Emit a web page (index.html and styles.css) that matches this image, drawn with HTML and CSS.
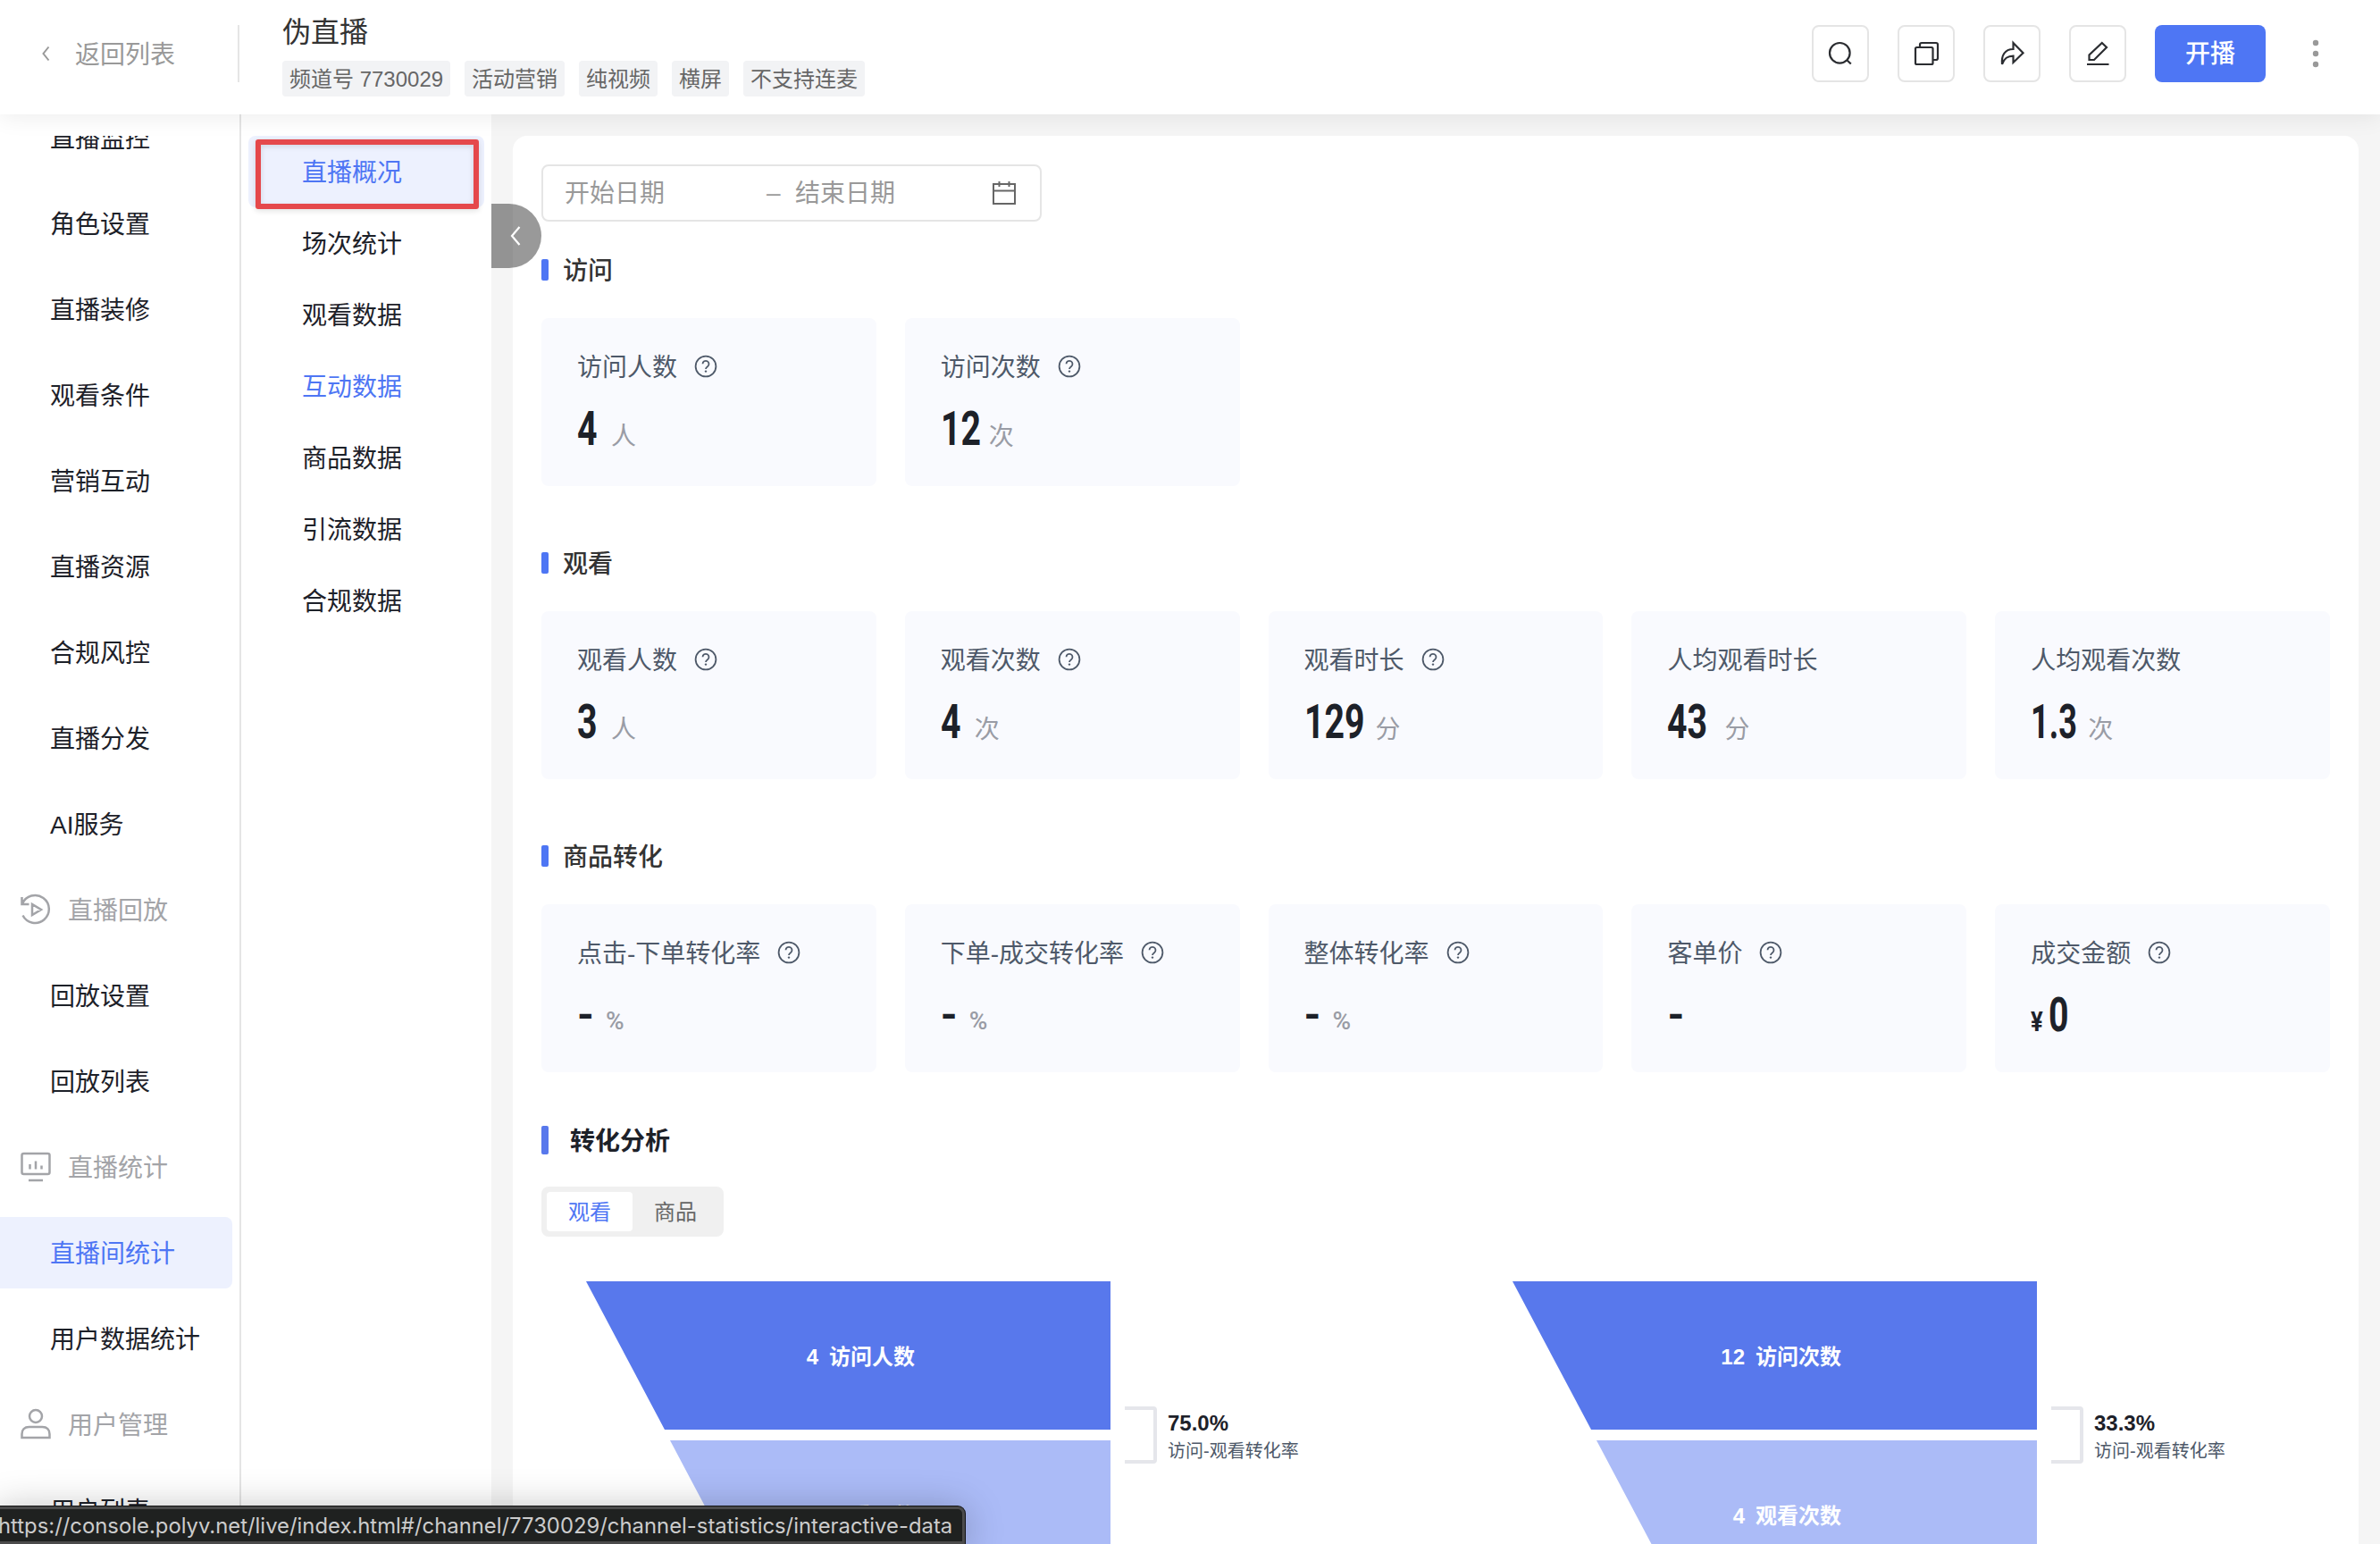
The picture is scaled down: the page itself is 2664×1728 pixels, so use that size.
FILE: index.html
```html
<!DOCTYPE html>
<html lang="zh-CN">
<head>
<meta charset="utf-8">
<title>直播概况</title>
<link rel="stylesheet" href="styles.css">
</head>
<body>
<svg class="defs" width="0" height="0" aria-hidden="true">
  <symbol id="help" viewBox="0 0 28 28"><circle cx="14" cy="14" r="11.400" fill="none" stroke="currentColor" stroke-width="1.800"/><path d="M10.500 11.300a3.500 3.500 0 1 1 5.500 2.900c-1.400 1-2 1.500-2 2.700" fill="none" stroke="currentColor" stroke-width="1.800"/><circle cx="14" cy="19.600" r="1.200" fill="currentColor"/></symbol>
</svg>
<header class="header">
  <a class="back"><svg width="12" height="18" viewBox="0 0 12 18"><path d="M9.500 1.500 3.500 9l6 7.500" fill="none" stroke="currentColor" stroke-width="2"/></svg><span class="t">返回列表</span></a>
  <div class="channel">
    <h1 class="channel-name">伪直播</h1>
    <div class="tags"><span class="tag">频道号 7730029</span><span class="tag">活动营销</span><span class="tag">纯视频</span><span class="tag">横屏</span><span class="tag">不支持连麦</span></div>
  </div>
  <div class="actions">
    <button class="icon-btn"><svg width="32" height="32" viewBox="0 0 32 32"><circle cx="15.300" cy="15.300" r="11.300"/><path d="m23 23 4.800 4.500"/></svg></button>
    <button class="icon-btn"><svg width="32" height="32" viewBox="0 0 32 32"><rect x="4" y="9" width="19.500" height="19" rx="1.500"/><path d="M9 9V6q0-2 2-2h16q2 0 2 2v15q0 2-2 2h-3"/></svg></button>
    <button class="icon-btn"><svg width="32" height="32" viewBox="0 0 32 32"><path d="M17.500 4 28.500 15.200 17.500 26v-7.300C11 18.700 7.500 21 5 28 4 18 8 11 17.500 11Z"/></svg></button>
    <button class="icon-btn"><svg width="32" height="32" viewBox="0 0 32 32"><path d="M4 28h24.500M20.800 4l5.200 5L12 23H6.500v-5.500Z"/></svg></button>
    <button class="start-btn">开播</button>
    <svg class="more" width="8" height="32" viewBox="0 0 8 32"><circle cx="4" cy="4" r="3.200"/><circle cx="4" cy="16" r="3.200"/><circle cx="4" cy="28" r="3.200"/></svg>
  </div>
</header>
<div class="layout">
  <nav class="sidebar">
    <div class="menu">
      <a class="item">直播监控</a><a class="item">角色设置</a><a class="item">直播装修</a><a class="item">观看条件</a><a class="item">营销互动</a><a class="item">直播资源</a><a class="item">合规风控</a><a class="item">直播分发</a><a class="item">AI服务</a>
      <div class="group"><svg width="36" height="36" viewBox="0 0 36 36"><path d="M3 11.500A15.500 15.500 0 1 1 3.500 24.500M2.500 4v8h8M14 12v12l10-6Z"/></svg><span class="t">直播回放</span></div>
      <a class="item">回放设置</a><a class="item">回放列表</a>
      <div class="group"><svg width="36" height="36" viewBox="0 0 36 36"><rect x="2.500" y="3" width="31" height="23" rx="2"/><path d="M10 33h16M11.500 15v5.500M18 11.500v9M24.500 16.500v4"/></svg><span class="t">直播统计</span></div>
      <a class="item active">直播间统计</a><a class="item">用户数据统计</a>
      <div class="group"><svg width="36" height="36" viewBox="0 0 36 36"><circle cx="18" cy="9" r="7"/><path d="M2.500 33v-4c0-5 3-8 8-8h15c5 0 8 3 8 8v4Z"/></svg><span class="t">用户管理</span></div>
      <a class="item">用户列表</a>
    </div>
  </nav>
  <nav class="submenu">
    <a class="sub active">直播概况<span class="marker"></span></a><a class="sub">场次统计</a><a class="sub">观看数据</a><a class="sub hover">互动数据</a><a class="sub">商品数据</a><a class="sub">引流数据</a><a class="sub">合规数据</a>
  </nav>
  <div class="collapse"><svg width="14" height="24" viewBox="0 0 14 24"><path d="M11.500 2 3 12l8.500 10" fill="none" stroke="#fff" stroke-width="2.200"/></svg></div>
  <main class="panel">
    <div class="date"><span class="start">开始日期</span><span class="dash">–</span><span class="end">结束日期</span><svg width="28" height="28" viewBox="0 0 28 28"><path d="M2 4h24v22H2ZM2 11.500h24M8.500 1v6M19.500 1v6"/></svg></div>
    <section class="block">
      <h2 class="title"><span class="t">访问</span></h2>
      <div class="cards">
        <div class="card"><div class="label"><span class="t">访问人数</span><svg class="help"><use href="#help"/></svg></div><div class="value"><b style="width:24px">4</b><i>人</i></div></div>
        <div class="card"><div class="label"><span class="t">访问次数</span><svg class="help"><use href="#help"/></svg></div><div class="value"><b style="width:40px">12</b><i>次</i></div></div>
      </div>
    </section>
    <section class="block">
      <h2 class="title"><span class="t">观看</span></h2>
      <div class="cards">
        <div class="card"><div class="label"><span class="t">观看人数</span><svg class="help"><use href="#help"/></svg></div><div class="value"><b style="width:24px">3</b><i>人</i></div></div>
        <div class="card"><div class="label"><span class="t">观看次数</span><svg class="help"><use href="#help"/></svg></div><div class="value"><b style="width:24px">4</b><i>次</i></div></div>
        <div class="card"><div class="label"><span class="t">观看时长</span><svg class="help"><use href="#help"/></svg></div><div class="value"><b style="width:66px">129</b><i>分</i></div></div>
        <div class="card"><div class="label"><span class="t">人均观看时长</span></div><div class="value"><b style="width:50px">43</b><i>分</i></div></div>
        <div class="card"><div class="label"><span class="t">人均观看次数</span></div><div class="value"><b class="decimal" style="width:50px">1.3</b><i>次</i></div></div>
      </div>
    </section>
    <section class="block">
      <h2 class="title"><span class="t">商品转化</span></h2>
      <div class="cards">
        <div class="card"><div class="label"><span class="t">点击-下单转化率</span><svg class="help"><use href="#help"/></svg></div><div class="value"><b class="none">-</b><i class="pct">%</i></div></div>
        <div class="card"><div class="label"><span class="t">下单-成交转化率</span><svg class="help"><use href="#help"/></svg></div><div class="value"><b class="none">-</b><i class="pct">%</i></div></div>
        <div class="card"><div class="label"><span class="t">整体转化率</span><svg class="help"><use href="#help"/></svg></div><div class="value"><b class="none">-</b><i class="pct">%</i></div></div>
        <div class="card"><div class="label"><span class="t">客单价</span><svg class="help"><use href="#help"/></svg></div><div class="value"><b class="none">-</b></div></div>
        <div class="card"><div class="label"><span class="t">成交金额</span><svg class="help"><use href="#help"/></svg></div><div class="value"><span class="yen">¥</span><b style="width:24px">0</b></div></div>
      </div>
    </section>
    <h2 class="title analysis"><span class="t">转化分析</span></h2>
    <div class="tabs"><span class="tab on">观看</span><span class="tab">商品</span></div>
    <div class="funnels">
      <svg class="funnel" width="900" height="344" viewBox="0 0 900 344">
        <path class="f1" d="M0 0h587v166H88Z"/><path class="f2" d="M94 178h493v166H182Z"/>
        <text class="ft" x="272" y="92.500">访问人数</text><text class="ft num" x="260" y="92.500">4</text>
        <text class="ft" x="272" y="270.500">观看人数</text><text class="ft num" x="260" y="270.500">3</text>
        <path class="bracket" d="M603 142h32q2 0 2 2v56q0 2-2 2h-32"/>
        <text class="rate" x="651" y="167">75.0%</text><text class="rate-label" x="651" y="197">访问-观看转化率</text>
      </svg>
      <svg class="funnel" width="900" height="344" viewBox="0 0 900 344">
        <path class="f1" d="M0 0h587v166H88Z"/><path class="f2" d="M94 178h493v166H182Z"/>
        <text class="ft" x="272" y="92.500">访问次数</text><text class="ft num" x="260" y="92.500">12</text>
        <text class="ft" x="272" y="270.500">观看次数</text><text class="ft num" x="260" y="270.500">4</text>
        <path class="bracket" d="M603 142h32q2 0 2 2v56q0 2-2 2h-32"/>
        <text class="rate" x="651" y="167">33.3%</text><text class="rate-label" x="651" y="197">访问-观看转化率</text>
      </svg>
    </div>
  </main>
</div>
<div class="status">https://console.polyv.net/live/index.html#/channel/7730029/channel-statistics/interactive-data</div>
</body>
</html>
```
FILE: styles.css
```css
* { box-sizing: border-box; }
body {
  margin: 0;
  width: 2664px;
  height: 1728px;
  overflow: hidden;
  display: flex;
  flex-direction: column;
  background: #f5f5f5;
  color: #1d2129;
  font: 28px/40px "Liberation Sans", "Noto Sans CJK SC", sans-serif;
}
h1, h2 { margin: 0; font-weight: 400; }
svg { display: block; flex: none; }
.defs { position: absolute; }
.t { padding-top: 3px; }

.header {
  height: 128px;
  flex: none;
  display: flex;
  align-items: flex-start;
  background: #fff;
  box-shadow: 0 4px 24px rgba(0, 0, 0, .07);
  position: relative;
  z-index: 2;
}
.back {
  width: 268px;
  height: 64px;
  margin-top: 28px;
  padding-left: 45px;
  display: flex;
  align-items: center;
  gap: 27px;
  color: #999;
  border-right: 2px solid #e5e5e5;
}
.channel { padding: 14px 0 0 48px; }
.channel-name { font-size: 32px; line-height: 44px; color: #333; }
.tags { display: flex; gap: 16px; margin-top: 10px; }
.tag {
  height: 40px;
  padding: 1px 8px 0;
  border-radius: 4px;
  background: #f2f3f5;
  color: #666;
  font-size: 24px;
  white-space: nowrap;
}
.actions { display: flex; align-items: center; gap: 32px; margin: 28px 68px 0 auto; }
.icon-btn {
  width: 64px;
  height: 64px;
  padding: 0;
  display: flex;
  align-items: center;
  justify-content: center;
  background: #fff;
  border: 2px solid #e5e5e5;
  border-radius: 8px;
}
.icon-btn svg { fill: none; stroke: #2b2d31; stroke-width: 2.2; }
.start-btn {
  width: 124px;
  height: 64px;
  padding: 2px 0 0;
  border: 0;
  border-radius: 8px;
  background: #4e76f4;
  color: #fff;
  font: 500 28px/40px "Liberation Sans", "Noto Sans CJK SC", sans-serif;
}
.more { fill: #999; margin-left: 20px; }

.layout { flex: 1; min-height: 0; display: flex; position: relative; }
.sidebar {
  width: 270px;
  flex: none;
  padding-top: 24px;
  background: #fff;
  border-right: 2px solid #e5e5e5;
}
.menu { height: 1576px; overflow: hidden; display: flex; flex-direction: column; gap: 16px; }
.item, .group { height: 80px; flex: none; display: flex; align-items: center; width: 260px; }
.item { padding: 3px 0 0 56px; border-radius: 0 8px 8px 0; }
.item:first-child { margin-top: -38px; }
.item.active { background: #edf1fe; color: #4e76f4; }
.group { padding-left: 22px; gap: 18px; color: #a3a4a8; }
.group svg { fill: none; stroke: currentColor; stroke-width: 2.5; }

.submenu { width: 280px; flex: none; padding: 24px 8px; background: #fff; }
.sub { height: 80px; padding: 3px 0 0 60px; display: flex; align-items: center; border-radius: 8px; position: relative; }
.sub.active { background: #edf1fe; color: #4e76f4; }
.sub.hover { color: #4e76f4; }
.marker {
  position: absolute;
  inset: 4px 6px -2px 8px;
  border: 6px solid #e5484b;
  border-radius: 3px;
  box-shadow: 0 2px 6px rgba(0, 0, 0, .12), inset 0 2px 6px rgba(0, 0, 0, .12);
}
.collapse {
  position: absolute;
  left: 550px;
  top: 100px;
  width: 56px;
  height: 72px;
  padding-left: 20px;
  display: flex;
  align-items: center;
  border-radius: 0 36px 36px 0;
  background: rgba(0, 0, 0, .4);
}

.panel {
  flex: 1;
  min-width: 0;
  margin: 24px 24px 0;
  padding: 32px 32px 0;
  overflow: hidden;
  background: #fff;
  border-radius: 16px 16px 0 0;
}
.date {
  width: 560px;
  height: 64px;
  padding: 0 26px 0 24px;
  display: flex;
  align-items: center;
  border: 2px solid #e5e5e5;
  border-radius: 8px;
  color: #999;
}
.date .start { width: 226px; padding-top: 1px; }
.date .dash { width: 32px; }
.date .end { flex: 1; padding-top: 1px; }
.date svg { fill: none; stroke: #666; stroke-width: 2; }
.block { height: 328px; padding-top: 34px; }
.title {
  height: 40px;
  display: flex;
  align-items: center;
  gap: 16px;
  color: #333;
  font-size: 28px;
  font-weight: 500;
}
.title::before { content: ""; width: 8px; height: 24px; border-radius: 2px; background: #4e76f4; }
.cards { display: grid; grid-template-columns: repeat(5, 1fr); gap: 32px; margin-top: 34px; }
.card { height: 188px; padding: 34px 40px; background: #f9fafe; border-radius: 8px; }
.label { height: 40px; display: flex; align-items: center; gap: 18px; color: #4e5969; white-space: nowrap; }
.help { width: 28px; height: 28px; }
.value { display: flex; align-items: baseline; gap: 14px; height: 70px; margin-top: 15px; line-height: 70px; }
.value b {
  flex: none;
  font: 700 53px/70px Roboto, sans-serif;
  transform: scaleX(.74);
  transform-origin: left;
  white-space: nowrap;
}
.value .decimal { transform: scaleX(.68); }
.value .none { width: 18px; transform: none; font-size: 48px; }
.value i { font-style: normal; color: #999ca5; }
.value .pct { font: 500 28px/70px Roboto, sans-serif; }
.yen { margin-right: -11px; font: 700 32px/70px Roboto, sans-serif; transform: scaleX(.8); transform-origin: left; }
.title.analysis { margin-top: 24px; gap: 24px; color: #1d2129; font-weight: 700; }
.analysis::before { height: 32px; background: #5878ec; }
.tabs {
  width: 204px;
  height: 56px;
  margin-top: 32px;
  padding: 6px;
  display: flex;
  border-radius: 8px;
  background: #f0f0f0;
  color: #666;
  font-size: 24px;
  line-height: 44px;
}
.tab { width: 96px; padding-top: 1px; line-height: 43px; text-align: center; border-radius: 4px; }
.tab.on { background: #fff; color: #4e76f4; }
.funnels { display: flex; gap: 137px; padding: 50px 0 0 50px; }
.f1 { fill: #5878ec; }
.f2 { fill: #abbbf7; }
.ft { fill: #fff; font-size: 24px; font-weight: 700; }
.ft.num { text-anchor: end; }
.bracket { fill: none; stroke: #e5e6eb; stroke-width: 4; }
.rate { fill: #1d2129; font-size: 24px; font-weight: 700; }
.rate-label { fill: #4e5969; font-size: 20px; }

.status {
  position: absolute;
  left: -4px;
  top: 1686px;
  z-index: 5;
  width: 1084px;
  height: 42px;
  padding-left: 2px;
  border: 3px solid #4b4b4b;
  border-left: 0;
  border-radius: 0 8px 0 0;
  background: #1f2120;
  box-shadow: 0 0 0 1px #111, 0 4px 44px rgba(0, 0, 0, .28);
  color: #ccc;
  font: 23.85px/37px Inter, sans-serif;
  white-space: nowrap;
}
```
